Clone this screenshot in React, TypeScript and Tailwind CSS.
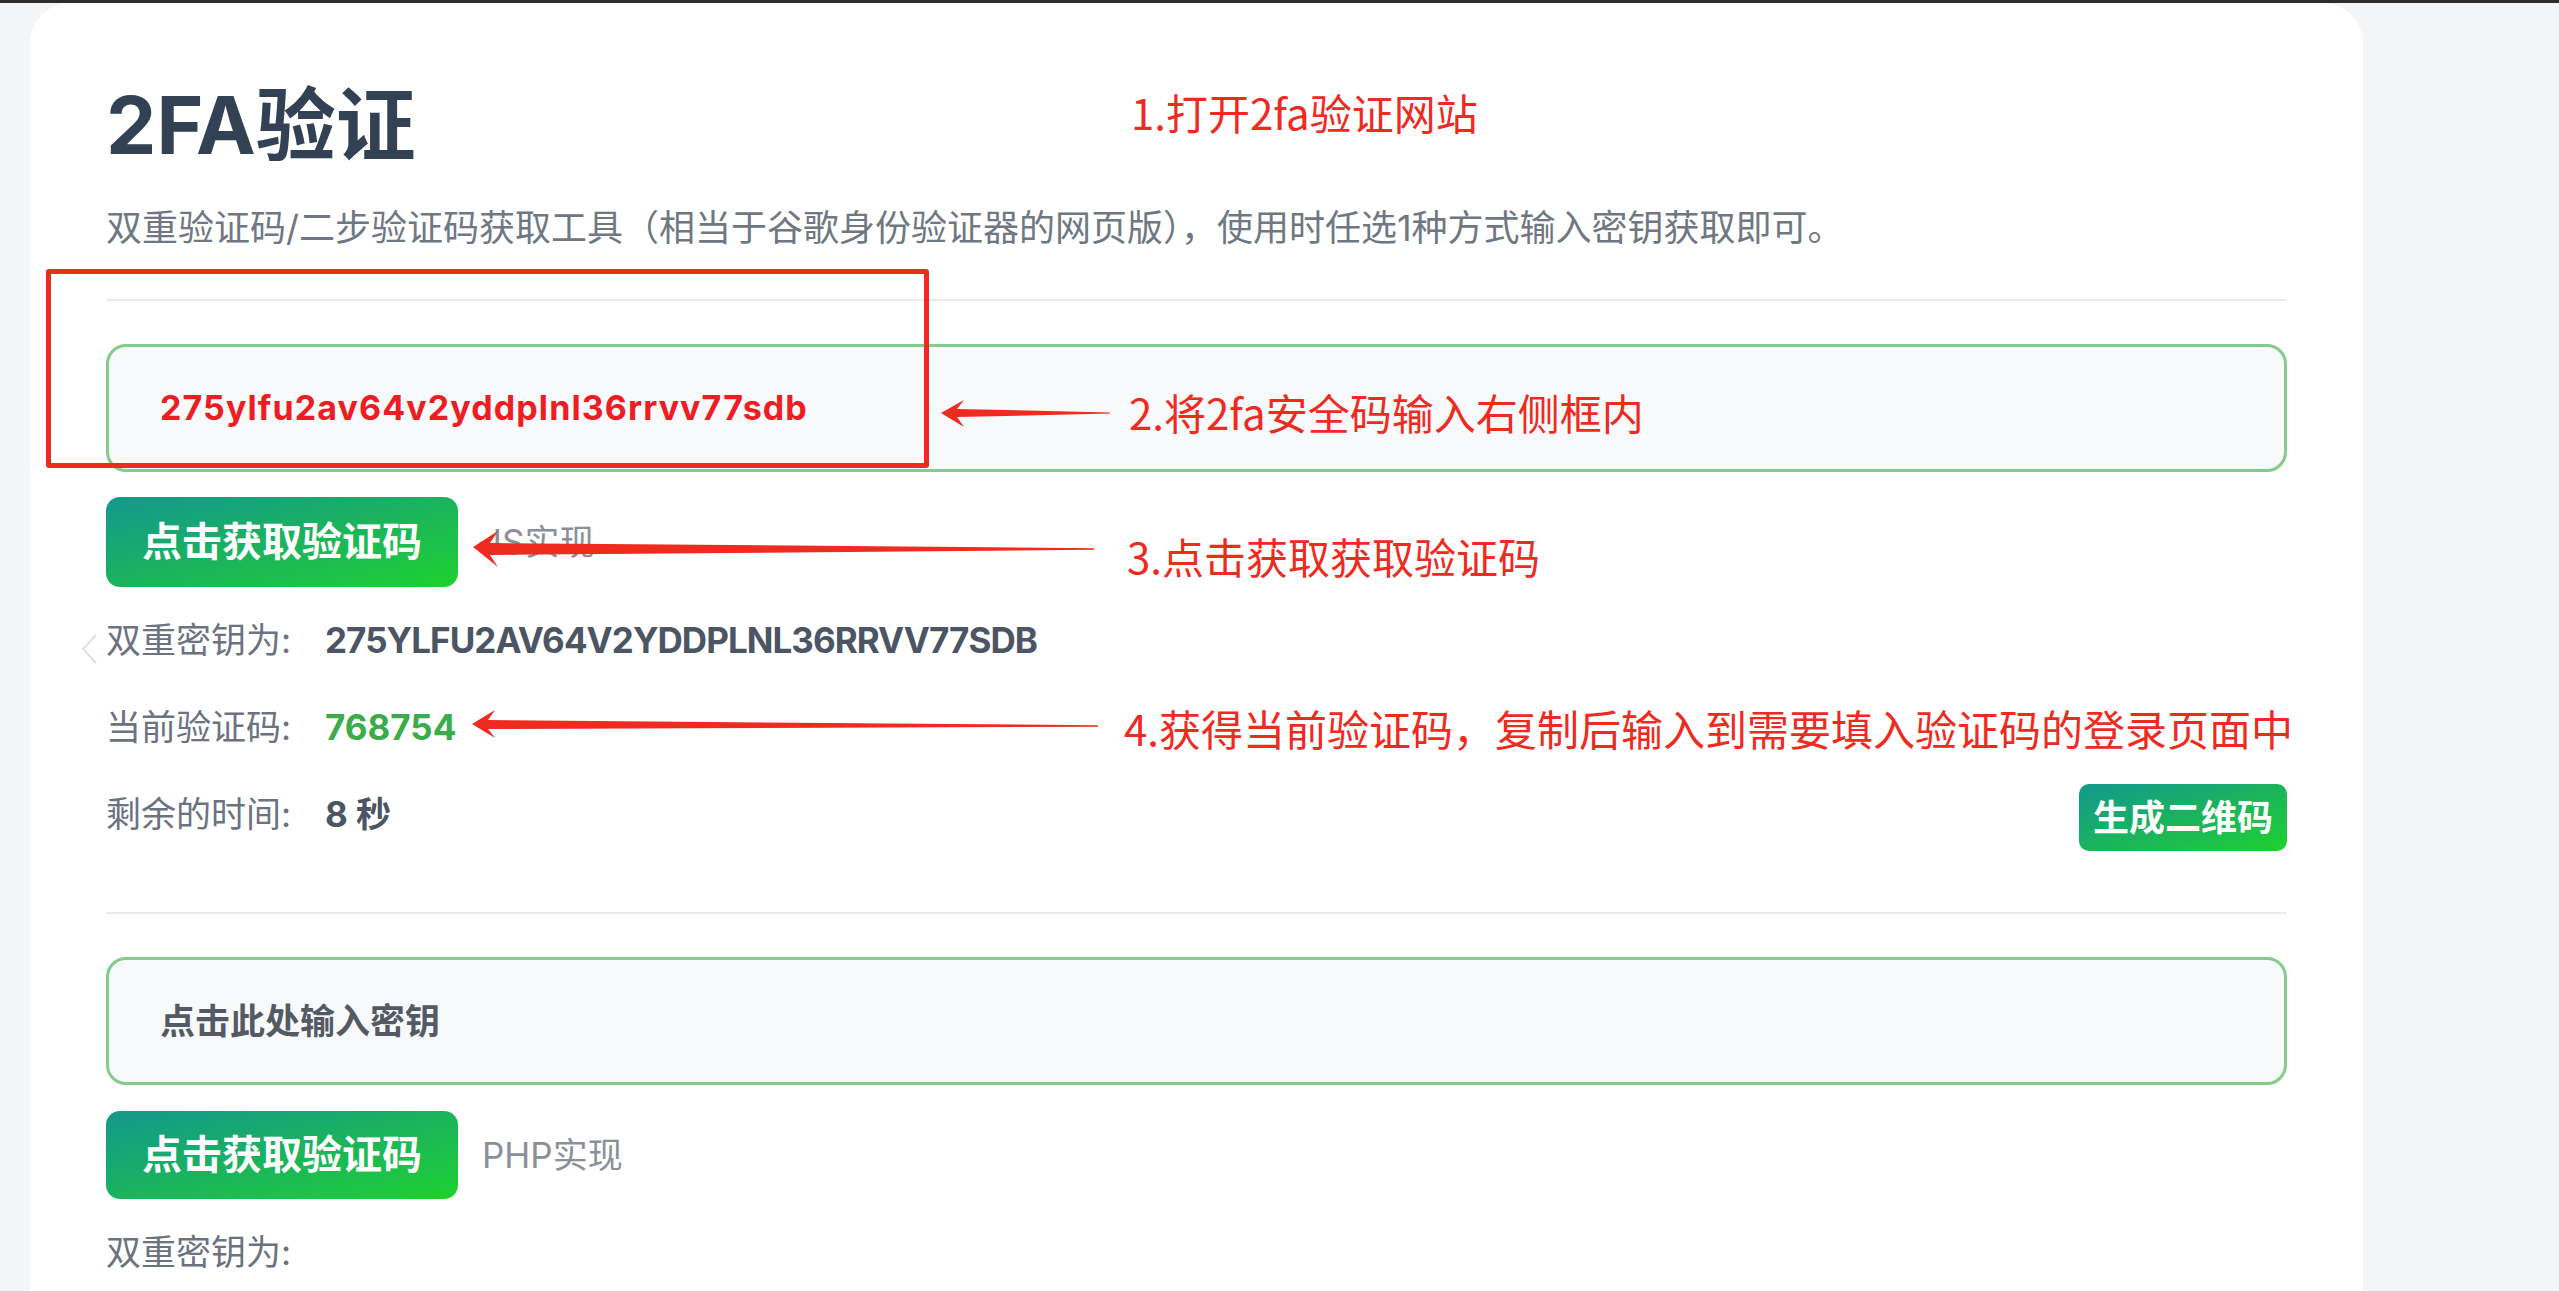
import React from 'react';

function Row({ label, children, extra, first }: { label: string; children?: React.ReactNode; extra?: React.ReactNode; first?: boolean }) {
  return (
    <div className={`${first ? 'mt-[10px]' : ''} flex h-[87px] items-center justify-between text-[35px] leading-none`}>
      <div className="flex items-center">
        <span className="w-[219px] text-[#6b7280]">{label}</span>
        {children}
      </div>
      {extra}
    </div>
  );
}

export default function App() {
  return (
    <div className="relative h-[1291px] w-full overflow-hidden bg-[#f4f5f7] font-['Inter','Noto_Sans_CJK_SC',sans-serif]">
      <div className="h-[3px] bg-[#2e2e2e]" />
      <div className="flex pl-[30px] pr-[196px]">
        <div className="min-h-[1400px] w-full rounded-t-[40px] bg-white px-[76px] pt-[82px]">
          <h1 className="text-[80px] font-bold leading-none text-[#334155]">2FA验证</h1>
          <p className="mt-[45px] text-[36px] leading-none text-[#6f7782]">
            双重验证码/二步验证码获取工具（相当于谷歌身份验证器的网页版），使用时任选1种方式输入密钥获取即可。
          </p>
          <div className="mt-[53px] h-[2px] bg-[#e9eaec]" />

          <div className="mt-[43px] flex h-[128px] items-center rounded-[20px] border-[3px] border-[#84cc8c] bg-[#f8f9fb] pl-[51px]">
            <span className="text-[34px] font-bold leading-none tracking-[1.1px] text-[#ee1d23]">275ylfu2av64v2yddplnl36rrvv77sdb</span>
          </div>
          <div className="mt-[25px] flex items-center gap-[24px]">
            <button className="h-[90px] rounded-[14px] bg-linear-to-br from-[#16978c] via-[#1bb35c] to-[#1fd126] px-[36px] text-[40px] font-bold leading-none text-white">
              点击获取验证码
            </button>
            <span className="text-[35px] leading-none text-[#8a9099]">JS实现</span>
          </div>

          <Row label="双重密钥为:" first>
            <span className="font-bold tracking-[-0.95px] text-[#4b5563]">275YLFU2AV64V2YDDPLNL36RRVV77SDB</span>
          </Row>
          <Row label="当前验证码:">
            <span className="font-bold text-[#3aac49]">768754</span>
          </Row>
          <Row
            label="剩余的时间:"
            extra={
              <button className="mt-[6px] h-[67px] rounded-[10px] bg-linear-to-br from-[#16978c] via-[#1bb35c] to-[#1fd126] px-[14px] text-[36px] font-bold leading-none text-white">
                生成二维码
              </button>
            }
          >
            <span className="font-bold text-[#4b5563]">8 秒</span>
          </Row>

          <div className="mt-[54px] h-[2px] bg-[#e9eaec]" />
          <div className="mt-[43px] flex h-[128px] items-center rounded-[20px] border-[3px] border-[#84cc8c] bg-[#f8f9fb] pl-[51px]">
            <span className="text-[35px] font-bold leading-none text-[#535a64]">点击此处输入密钥</span>
          </div>
          <div className="mt-[26px] flex items-center gap-[24px]">
            <button className="h-[88px] rounded-[14px] bg-linear-to-br from-[#16978c] via-[#1bb35c] to-[#1fd126] px-[36px] text-[40px] font-bold leading-none text-white">
              点击获取验证码
            </button>
            <span className="text-[35px] leading-none text-[#8a9099]">PHP实现</span>
          </div>
          <Row label="双重密钥为:" first />
        </div>
      </div>

      {/* annotation overlays */}
      <div className="pointer-events-none absolute left-[46px] top-[269px] h-[199px] w-[883px] rounded-[3px] border-[5px] border-[#ef2a1f]" />
      <svg className="pointer-events-none absolute left-0 top-0" width="2559" height="1291" viewBox="0 0 2559 1291">
        <polyline points="96,635 83,649 96,663" fill="none" stroke="#dde0e4" strokeWidth="2" />
        <polygon points="941,413 964,400 957,409 1110,412.4 1110,413.6 957,417 964,427" fill="#ef2a1f" />
        <polygon points="473,547 498,531 490,543 1094,548.2 1094,549.8 490,555 498,567" fill="#ef2a1f" />
        <polygon points="472,724 495,710 488,720 1098,725.3 1098,726.7 488,729 495,738" fill="#ef2a1f" />
      </svg>
      <div className="pointer-events-none absolute left-[1131px] top-[91px] font-['Noto_Sans_CJK_SC',sans-serif] text-[42px] leading-none text-[#ef2a1f]">1.打开2fa验证网站</div>
      <div className="pointer-events-none absolute left-[1129px] top-[391px] font-['Noto_Sans_CJK_SC',sans-serif] text-[42px] leading-none text-[#ef2a1f]">2.将2fa安全码输入右侧框内</div>
      <div className="pointer-events-none absolute left-[1127px] top-[535px] font-['Noto_Sans_CJK_SC',sans-serif] text-[42px] leading-none text-[#ef2a1f]">3.点击获取获取验证码</div>
      <div className="pointer-events-none absolute left-[1124px] top-[707px] font-['Noto_Sans_CJK_SC',sans-serif] text-[42px] leading-none text-[#ef2a1f]">4.获得当前验证码，复制后输入到需要填入验证码的登录页面中</div>
    </div>
  );
}
